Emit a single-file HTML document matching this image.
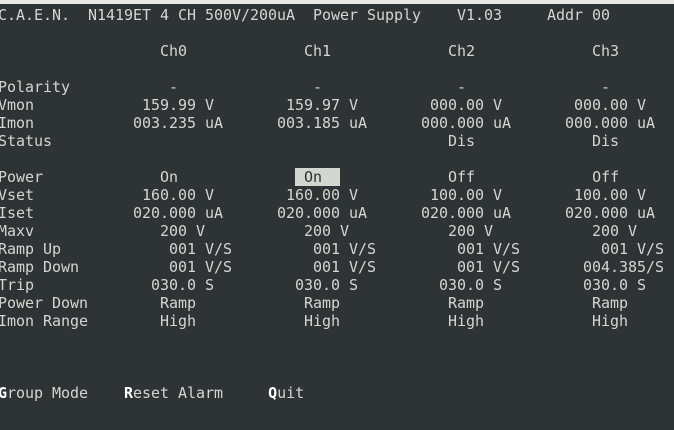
<!DOCTYPE html>
<html><head><meta charset="utf-8"><style>
html,body{margin:0;padding:0;}
body{width:674px;height:430px;background:#2e3436;overflow:hidden;position:relative;}
.top{position:absolute;left:0;top:0;width:674px;height:4px;background:#e8e8e7;}
pre{position:absolute;left:-2px;top:6px;margin:0;font-family:"DejaVu Sans Mono","Liberation Mono",monospace;font-size:15px;line-height:18px;letter-spacing:-0.03px;color:#d3d7cf;white-space:pre;}
.hl{background:#d3d7cf;color:#2e3436;}
b{color:#ffffff;}
</style></head><body>
<div class="top"></div>
<pre>C.A.E.N.  N1419ET 4 CH 500V/200uA  Power Supply    V1.03     Addr 00

                  Ch0             Ch1             Ch2             Ch3

Polarity           -               -               -               -
Vmon            159.99 V        159.97 V        000.00 V        000.00 V
Imon           003.235 uA      003.185 uA      000.000 uA      000.000 uA
Status                                            Dis             Dis

Power             On             <span class="hl"> On  </span>            Off             Off
Vset            160.00 V        160.00 V        100.00 V        100.00 V
Iset           020.000 uA      020.000 uA      020.000 uA      020.000 uA
Maxv              200 V           200 V           200 V           200 V
Ramp Up            001 V/S         001 V/S         001 V/S         001 V/S
Ramp Down          001 V/S         001 V/S         001 V/S       004.385/S
Trip             030.0 S         030.0 S         030.0 S         030.0 S
Power Down        Ramp            Ramp            Ramp            Ramp
Imon Range        High            High            High            High



<b>G</b>roup Mode    <b>R</b>eset Alarm     <b>Q</b>uit</pre>
</body></html>
